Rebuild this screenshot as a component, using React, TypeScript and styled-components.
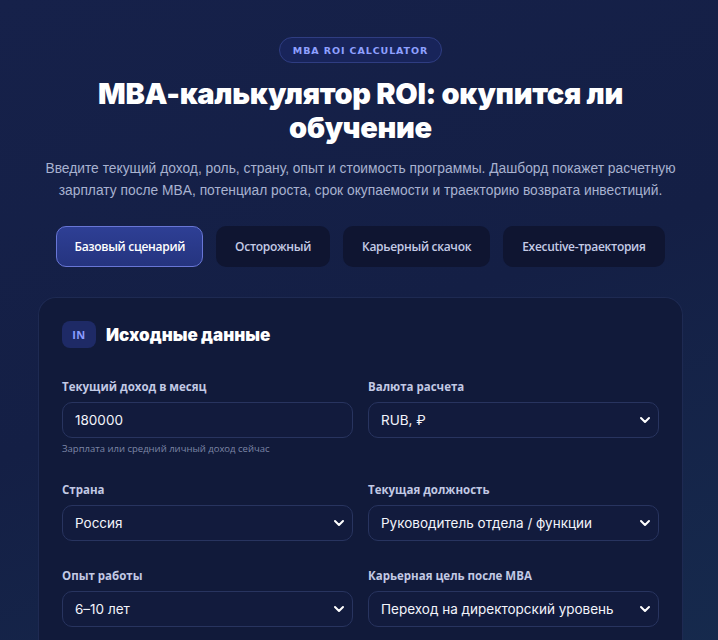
import React from "react";
import styled, { createGlobalStyle } from "styled-components";
import { ChevronDown } from "lucide-react";

const Global = createGlobalStyle`
  html, body { margin: 0; padding: 0; }
  body {
    background: linear-gradient(160deg, #16214a 0%, #141f45 50%, #162a4d 100%);
    min-height: 100vh;
    font-family: "Open Sans", "Liberation Sans", sans-serif;
    color: #fff;
  }
  * { box-sizing: border-box; }
`;

const Page = styled.div`
  padding: 37px 35px 0 38px;
  display: flex;
  flex-direction: column;
  align-items: center;
`;

const Badge = styled.div`
  height: 26px;
  padding: 0 13px;
  border-radius: 13px;
  border: 1px solid #2f3d82;
  background: #18245a;
  color: #8fa0ff;
  font-family: "DejaVu Sans", sans-serif;
  font-weight: 700;
  font-size: 9.5px;
  letter-spacing: 0.9px;
  display: flex;
  align-items: center;
`;

const Title = styled.h1`
  margin: 14px 0 0;
  max-width: 560px;
  text-align: center;
  font-family: Inter, "Open Sans", sans-serif;
  font-weight: 900;
  font-size: 29px;
  line-height: 34px;
  letter-spacing: -0.3px;
  color: #ffffff;
`;

const Subtitle = styled.p`
  margin: 13px 0 0;
  text-align: center;
  font-family: "Liberation Sans", Arial, sans-serif;
  font-size: 13.8px;
  line-height: 22px;
  color: #a8b2d0;
  white-space: nowrap;
`;

const Tabs = styled.div`
  margin-top: 24px;
  display: flex;
  gap: 13px;
  justify-content: center;
`;

const Tab = styled.button<{ $active?: boolean }>`
  height: 41px;
  padding: 0 ${(p) => (p.$active ? 17 : 18)}px;
  border-radius: 10px;
  font-family: "Open Sans", sans-serif;
  font-weight: 600;
  font-size: 12px;
  letter-spacing: -0.3px;
  cursor: pointer;
  border: 1px solid ${(p) => (p.$active ? "#6876d6" : "transparent")};
  background: ${(p) =>
    p.$active ? "linear-gradient(180deg, #2e3f95 0%, #25347f 100%)" : "#0f1531"};
  color: ${(p) => (p.$active ? "#ffffff" : "#c4cbe6")};
`;

const Card = styled.section`
  margin-top: 30px;
  align-self: stretch;
  background: #111a3a;
  border: 1px solid #1e2a52;
  border-bottom: none;
  border-radius: 18px 18px 0 0;
  padding: 23px 23px 20px;
  min-height: 360px;
`;

const CardHead = styled.div`
  display: flex;
  align-items: center;
  gap: 10px;
`;

const HeadIcon = styled.div`
  width: 34px;
  height: 27px;
  border-radius: 8px;
  background: #1e2a66;
  color: #8b9cff;
  font-weight: 700;
  font-size: 11px;
  letter-spacing: 0.5px;
  display: flex;
  align-items: center;
  justify-content: center;
`;

const CardTitle = styled.h2`
  margin: 0;
  font-family: Inter, sans-serif;
  font-weight: 900;
  font-size: 17px;
  color: #fff;
`;

const Grid = styled.div`
  margin-top: 32px;
  display: grid;
  grid-template-columns: 1fr 1fr;
  column-gap: 15px;
  row-gap: 28px;
`;

const Field = styled.div`
  display: flex;
  flex-direction: column;
`;

const Label = styled.label`
  font-size: 11.5px;
  font-weight: 700;
  color: #c2c9e4;
  margin-bottom: 8px;
  line-height: 14px;
`;

const Control = styled.div`
  height: 36px;
  border-radius: 10px;
  border: 1px solid #28345f;
  background: #121b3d;
  display: flex;
  align-items: center;
  justify-content: space-between;
  padding: 0 5px 0 12px;
  font-family: Inter, sans-serif;
  font-size: 13.5px;
  color: #f2f4fb;
`;

const Hint = styled.div`
  margin-top: 5px;
  font-size: 9.5px;
  color: #7d86a6;
  line-height: 12px;
`;

const Chevron = styled(ChevronDown)`
  color: #ffffff;
  flex-shrink: 0;
`;

const tabs = ["Базовый сценарий", "Осторожный", "Карьерный скачок", "Executive-траектория"];

type F = { label: string; value: string; select?: boolean; hint?: string };
const fields: F[] = [
  { label: "Текущий доход в месяц", value: "180000", hint: "Зарплата или средний личный доход сейчас" },
  { label: "Валюта расчета", value: "RUB, ₽", select: true },
  { label: "Страна", value: "Россия", select: true },
  { label: "Текущая должность", value: "Руководитель отдела / функции", select: true },
  { label: "Опыт работы", value: "6–10 лет", select: true },
  { label: "Карьерная цель после MBA", value: "Переход на директорский уровень", select: true },
];

export default function App() {
  return (
    <>
      <Global />
      <Page>
        <Badge>MBA ROI CALCULATOR</Badge>
        <Title>MBA-калькулятор ROI: окупится ли обучение</Title>
        <Subtitle>
          Введите текущий доход, роль, страну, опыт и стоимость программы. Дашборд покажет расчетную
          <br />
          зарплату после MBA, потенциал роста, срок окупаемости и траекторию возврата инвестиций.
        </Subtitle>
        <Tabs>
          {tabs.map((t, i) => (
            <Tab key={t} $active={i === 0}>
              {t}
            </Tab>
          ))}
        </Tabs>
        <Card>
          <CardHead>
            <HeadIcon>IN</HeadIcon>
            <CardTitle>Исходные данные</CardTitle>
          </CardHead>
          <Grid>
            {fields.map((f) => (
              <Field key={f.label}>
                <Label>{f.label}</Label>
                <Control>
                  <span>{f.value}</span>
                  {f.select && <Chevron size={16} strokeWidth={3} />}
                </Control>
                {f.hint && <Hint>{f.hint}</Hint>}
              </Field>
            ))}
          </Grid>
        </Card>
      </Page>
    </>
  );
}
